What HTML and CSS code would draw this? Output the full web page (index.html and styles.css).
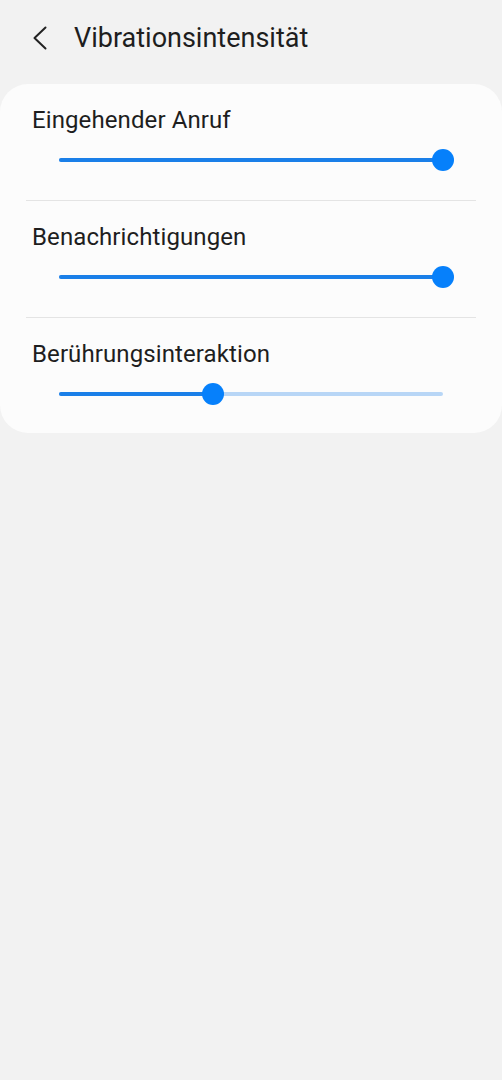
FILE: index.html
```html
<!DOCTYPE html>
<html lang="de">
<head>
  <meta charset="UTF-8">
  <meta name="viewport" content="width=device-width, initial-scale=1.0">
  <title>Vibrationsintensität</title>
  <link rel="stylesheet" href="styles.css">
</head>
<body>

  <header class="topbar">
    <svg class="back" width="14" height="24" viewBox="0 0 14 24">
      <polyline points="12.5,1.5 1.5,12 12.5,22.5" fill="none" stroke="#222" stroke-width="2" stroke-linecap="round" stroke-linejoin="round"/>
    </svg>
    <h1>Vibrationsintensität</h1>
  </header>

  <section class="card">
    <div class="row">
      <div class="label">Eingehender Anruf</div>
      <div class="slider">
        <div class="track"><div class="fill" style="width:100%"></div></div>
        <div class="thumb" style="left:100%"></div>
      </div>
    </div>
    <div class="divider"></div>
    <div class="row">
      <div class="label">Benachrichtigungen</div>
      <div class="slider">
        <div class="track"><div class="fill" style="width:100%"></div></div>
        <div class="thumb" style="left:100%"></div>
      </div>
    </div>
    <div class="divider"></div>
    <div class="row">
      <div class="label">Berührungsinteraktion</div>
      <div class="slider">
        <div class="track"><div class="fill" style="width:40%"></div></div>
        <div class="thumb" style="left:40%"></div>
      </div>
    </div>
  </section>

</body>
</html>
```

FILE: styles.css
```css
body {
  margin: 0;
  background: #f2f2f2;
  font-family: Roboto, 'Noto Sans', sans-serif;
  color: #1e1e1e;
}

.topbar {
  display: flex;
  align-items: center;
  height: 76px;
  padding-left: 33px;
}

.back {
  display: block;
}

h1 {
  margin: 0 0 0 27px;
  font-size: 27px;
  font-weight: 400;
  line-height: 32px;
}

.card {
  margin-top: 8px;
  background: #fcfcfc;
  border-radius: 28px;
}

.row {
  padding: 22px 0 29px;
}

.row:last-child {
  padding-bottom: 28px;
}

.label {
  padding-left: 32px;
  font-size: 24px;
  line-height: 28px;
  letter-spacing: 0.1px;
}

.slider {
  position: relative;
  height: 22px;
  margin: 15px 59px 0;
}

.track {
  position: absolute;
  left: 0;
  right: 0;
  top: 9px;
  height: 4px;
  border-radius: 2px;
  background: #b8d6f6;
}

.fill {
  height: 100%;
  border-radius: 2px;
  background: #1a7fe8;
}

.thumb {
  position: absolute;
  top: 0;
  width: 22px;
  height: 22px;
  margin-left: -11px;
  border-radius: 50%;
  background: #0680fb;
}

.divider {
  height: 1px;
  margin: 0 26px;
  background: #e4e4e4;
}
```
